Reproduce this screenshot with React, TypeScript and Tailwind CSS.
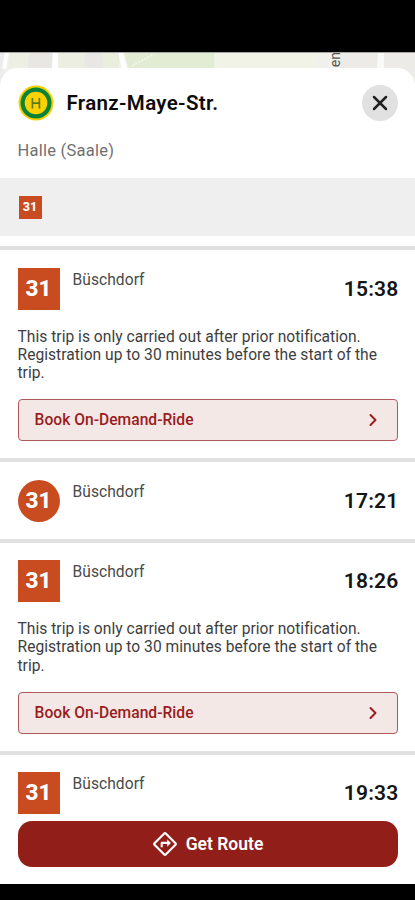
import { ChevronRight, X } from "lucide-react"
import { MdOutlineDirections } from "react-icons/md"

type Departure = {
  line: string
  destination: string
  time: string
  badge: "square" | "round"
  notice?: string
}

const onDemandNotice =
  "This trip is only carried out after prior notification. Registration up to 30 minutes before the start of the trip."

const departures: Departure[] = [
  { line: "31", destination: "Büschdorf", time: "15:38", badge: "square", notice: onDemandNotice },
  { line: "31", destination: "Büschdorf", time: "17:21", badge: "round" },
  { line: "31", destination: "Büschdorf", time: "18:26", badge: "square", notice: onDemandNotice },
  { line: "31", destination: "Büschdorf", time: "19:33", badge: "square" },
]

function StopIcon() {
  return (
    <svg viewBox="0 0 36 36" className="size-9 shrink-0">
      <circle cx="18" cy="18" r="17.5" fill="#f8d000" />
      <circle cx="18" cy="18" r="13.4" fill="#fbd200" stroke="#0b8235" strokeWidth="4.2" />
      <path d="M14.4 13v10.4M21.4 13v10.4M14.4 18.2h7" fill="none" stroke="#5b7a1c" strokeWidth="1.7" />
    </svg>
  )
}

function MapStrip() {
  return (
    <svg viewBox="0 0 415 40" className="absolute inset-x-0 top-0 h-10 w-full">
      <rect width="415" height="40" fill="#f1f1eb" />
      <path d="M0 0h5L2 40H0z" fill="#ececea" />
      <path d="M10 1h19v15H8z" fill="#eeefe4" />
      <path d="M29 1h23v15H28z" fill="#e8e7e3" />
      <path d="M59 1h26v15H58z" fill="#eceee2" />
      <path d="M85 1h18v15H84z" fill="#e8e7e3" />
      <path d="M103 1h16v15h-16z" fill="#e9efdc" />
      <path d="M124 0h90v17h-85z" fill="#e2ecd3" />
      <path d="M214 0h101v17H214z" fill="#f1f3e6" />
      <path d="M5 0h4L6 17H2zM53 0h5v17h-6zM118 0h5l4 17h-5z" fill="#fff" />
      <path d="M132 14l22-12" fill="none" stroke="#f4f7ef" strokeWidth="1.5" strokeDasharray="2 1.5" />
      <path d="M340 0h75v40h-75z" fill="#ecebe8" />
      <path d="M378 0h6v17h-7z" fill="#fafaf8" />
      <rect width="415" height="1" fill="#a5a5a3" />
    </svg>
  )
}

function DepartureCard({ departure }: { departure: Departure }) {
  return (
    <section className="shrink-0 px-[17.5px] pt-[17.5px] pb-[17px] border-b-4 border-[#e0e0e0] last:border-b-0 last:pb-0">
      <div className="flex h-[42px]">
        <div
          className={`size-[42px] shrink-0 bg-[#c94b20] text-white text-[22.5px] font-extrabold flex items-center justify-center ${
            departure.badge === "round" ? "rounded-full" : ""
          }`}
        >
          {departure.line}
        </div>
        <p className="ml-[13px] mt-[2px] flex-1 text-[15.6px] leading-5 tracking-[0.05px] text-[#4a4a4a]">{departure.destination}</p>
        <p className="-mr-px self-center text-[21px] leading-6 font-semibold tracking-[0.2px] text-[#151515]">{departure.time}</p>
      </div>

      {departure.notice && (
        <>
          <p className="mt-[18px] h-[54.5px] text-[15.6px] leading-[18.3px] tracking-[0.02px] text-[#3e3e3e]">{departure.notice}</p>
          <button className="mt-[17px] h-[42px] w-full flex items-center justify-between rounded-[4px] border border-[#b0585c] bg-[#f4e8e7] pl-4 pr-[14px] text-[#9a1c1e]">
            <span className="pt-[2px] text-[15.6px] font-medium tracking-[0.03px]">Book On-Demand-Ride</span>
            <ChevronRight size={20} strokeWidth={2.4} />
          </button>
        </>
      )}
    </section>
  )
}

export default function App() {
  return (
    <div className="h-[900px] w-[415px] overflow-hidden bg-black pt-[52px] pb-4 font-['Roboto',sans-serif]">
      <div className="relative h-full overflow-hidden">
        <MapStrip />
        <span className="absolute left-[327px] top-0 text-[14px] leading-[16px] text-[#555] [writing-mode:vertical-rl] rotate-180">
          en
        </span>

        <main className="relative mt-4 flex h-[816px] flex-col overflow-hidden rounded-t-[18px] bg-white">
          <header className="shrink-0 px-[17.5px] pt-[17px]">
            <div className="flex h-9 items-center">
              <StopIcon />
              <h1 className="ml-[13px] flex-1 pt-px text-[20.5px] font-semibold tracking-[0.33px] text-[#0c0c0c]">Franz-Maye-Str.</h1>
              <button className="flex size-9 items-center justify-center rounded-full bg-[#e1e1e1] text-[#222]">
                <X size={24} strokeWidth={2.5} />
              </button>
            </div>
            <p className="mt-5 text-[16.5px] leading-5 tracking-[0.25px] text-[#707070]">Halle (Saale)</p>
          </header>

          <div className="mt-[17px] flex h-[58px] shrink-0 items-center bg-[#efefef] px-[18.5px]">
            <span className="flex size-[23px] items-center justify-center bg-[#c94b20] pt-px text-[12.5px] font-extrabold text-white">31</span>
          </div>
          <div className="h-[14px] shrink-0 border-b-4 border-[#e0e0e0]" />

          <div className="flex min-h-0 flex-1 flex-col overflow-hidden">
            {departures.map((departure) => (
              <DepartureCard key={departure.time} departure={departure} />
            ))}
          </div>

          <footer className="shrink-0 bg-white px-[17.5px] pb-[17.5px]">
            <button className="flex h-[46px] w-full items-center justify-center gap-2 rounded-[14px] bg-[#921e19] text-white">
              <MdOutlineDirections size={26} />
              <span className="mt-px text-[17.5px] font-semibold">Get Route</span>
            </button>
          </footer>
        </main>
      </div>
    </div>
  )
}
